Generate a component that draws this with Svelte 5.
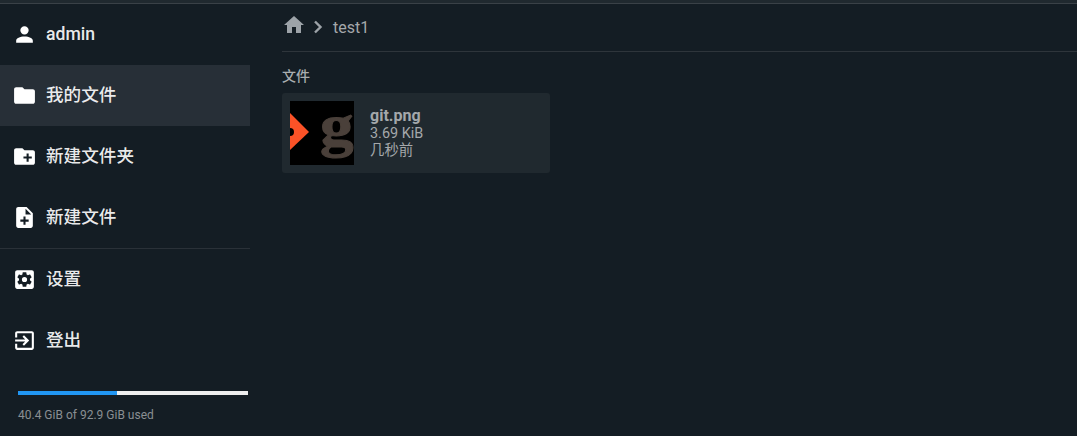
<script>
    const used = 40.4;
    const total = 92.9;
    $: percent = Math.floor((used / total) * 100);
</script>

<div class="page">
    <div class="topbar"></div>
    <div class="body">
        <nav class="sidebar">
            <div class="item user">
                <svg viewBox="0 0 24 24"><path d="M12 4a4 4 0 0 1 4 4 4 4 0 0 1-4 4 4 4 0 0 1-4-4 4 4 0 0 1 4-4m0 10c4.42 0 8 1.79 8 4v2H4v-2c0-2.21 3.58-4 8-4z" /></svg>
                <span>admin</span>
            </div>
            <div class="item active">
                <svg viewBox="0 0 24 24"><path d="M10 4H4c-1.1 0-2 .9-2 2v12c0 1.1.9 2 2 2h16c1.1 0 2-.9 2-2V8c0-1.1-.9-2-2-2h-8l-2-2z" /></svg>
                <span>我的文件</span>
            </div>
            <div class="item">
                <svg viewBox="0 0 24 24"><path d="M20 6h-8l-2-2H4c-1.11 0-2 .89-2 2v12c0 1.11.89 2 2 2h16c1.11 0 2-.89 2-2V8c0-1.11-.89-2-2-2zm-1 8h-3v3h-2v-3h-3v-2h3V9h2v3h3v2z" /></svg>
                <span>新建文件夹</span>
            </div>
            <div class="item">
                <svg viewBox="0 0 24 24"><path d="M14 2H6c-1.1 0-2 .9-2 2v16c0 1.1.9 2 2 2h12c1.1 0 2-.9 2-2V8l-6-6zm2 14h-3v3h-2v-3H8v-2h3v-3h2v3h3v2zm-3-7V3.5L18.5 9H13z" /></svg>
                <span>新建文件</span>
            </div>
            <div class="divider"></div>
            <div class="item">
                <svg viewBox="0 0 24 24"><path d="M19 3H5c-1.1 0-2 .9-2 2v14c0 1.1.9 2 2 2h14c1.1 0 2-.9 2-2V5c0-1.1-.9-2-2-2zm-1.75 9c0 .23-.02.46-.05.68l1.48 1.16c.13.11.17.3.08.45l-1.4 2.42c-.09.15-.27.21-.43.15l-1.74-.7c-.36.28-.76.51-1.18.69l-.26 1.85c-.03.17-.18.3-.35.3h-2.8c-.17 0-.32-.13-.35-.29l-.26-1.85c-.43-.18-.82-.41-1.18-.69l-1.74.7c-.16.06-.34 0-.43-.15l-1.4-2.42c-.09-.15-.05-.34.08-.45l1.48-1.16c-.03-.23-.05-.46-.05-.69s.02-.46.05-.68l-1.48-1.16c-.13-.11-.17-.3-.08-.45l1.4-2.42c.09-.15.27-.21.43-.15l1.74.7c.36-.28.76-.51 1.18-.69l.26-1.85c.03-.17.18-.3.35-.3h2.8c.17 0 .32.13.35.29l.26 1.85c.43.18.82.41 1.18.69l1.74-.7c.16-.06.34 0 .43.15l1.4 2.42c.09.15.05.34-.08.45l-1.48 1.16c.03.23.05.46.05.69zM12 9.5a2.5 2.5 0 1 0 0 5 2.5 2.5 0 0 0 0-5z" /></svg>
                <span>设置</span>
            </div>
            <div class="item">
                <svg viewBox="0 0 24 24"><path d="M10.09 15.59L11.5 17l5-5-5-5-1.41 1.41L12.67 11H3v2h9.67l-2.58 2.59zM19 3H5c-1.11 0-2 .9-2 2v4h2V5h14v14H5v-4H3v4c0 1.1.89 2 2 2h14c1.1 0 2-.9 2-2V5c0-1.1-.9-2-2-2z" /></svg>
                <span>登出</span>
            </div>
            <div class="usage">
                <div class="bar"><div class="fill" style="width: {percent}%;"></div></div>
                <div class="usage-text">{used} GiB of {total} GiB used</div>
            </div>
        </nav>

        <main class="content">
            <div class="breadcrumbs">
                <svg class="home" viewBox="0 0 24 24"><path d="M10 20v-6h4v6h5v-8h3L12 3 2 12h3v8z" /></svg>
                <svg class="chevron" viewBox="0 0 24 24"><path d="M8 6.5l5.5 5.5L8 17.5" /></svg>
                <span>test1</span>
            </div>
            <h2>文件</h2>
            <div class="card">
                <div class="thumb">
                    <svg class="arrow" viewBox="0 0 64 64">
                        <path d="M0 12 L19 31 L0 49 Z" fill="#fb5227" />
                        <circle cx="0" cy="31" r="4" fill="#000" />
                    </svg>
                    <span class="letter">g</span>
                </div>
                <div class="info">
                    <div class="name">git.png</div>
                    <div>3.69 KiB</div>
                    <div>几秒前</div>
                </div>
            </div>
        </main>
    </div>
</div>

<style>
    :global(body) {
        margin: 0;
        background: #141d24;
    }

    .page {
        height: 436px;
        overflow: hidden;
        background: #141d24;
        font-family: Roboto, "Noto Sans CJK SC", sans-serif;
    }

    .topbar {
        height: 3px;
        background: #20292f;
        border-bottom: 1px solid #3a4147;
    }

    .body {
        display: flex;
    }

    .sidebar {
        width: 250px;
        flex-shrink: 0;
    }

    .item {
        height: 61px;
        box-sizing: border-box;
        padding: 0 0 5px 12px;
        display: flex;
        align-items: center;
        gap: 9px;
        color: rgba(255, 255, 255, 0.92);
        font-size: 17.6px;
        font-weight: 500;
    }

    .item.user {
        padding-bottom: 2px;
    }

    .item svg {
        width: 25px;
        height: 25px;
        margin-top: 4px;
        fill: #fff;
    }

    .item.user svg {
        margin-top: 1px;
    }

    .active {
        background: #272f37;
    }

    .divider {
        height: 1px;
        background: #2a3138;
    }

    .usage {
        padding: 20px 2px 0 18px;
    }

    .bar {
        height: 4px;
        background: #eee;
    }

    .fill {
        height: 100%;
        background: #2196f3;
    }

    .usage-text {
        margin-top: 13px;
        font-size: 12px;
        color: #8a8f93;
    }

    .content {
        flex: 1;
        padding: 0 0 0 32px;
    }

    .breadcrumbs {
        height: 48px;
        box-sizing: border-box;
        padding-bottom: 1px;
        display: flex;
        align-items: center;
        border-bottom: 1px solid #2e353b;
        color: #a4a8ab;
        font-size: 16px;
    }

    .home {
        width: 24px;
        height: 24px;
        margin-top: -4px;
        fill: #9da3a8;
    }

    .chevron {
        width: 24px;
        height: 24px;
        margin-left: 1px;
        margin-right: 2px;
        fill: none;
        stroke: #9da3a8;
        stroke-width: 2.4;
    }

    h2 {
        margin: 15px 0 8px;
        font-size: 14px;
        line-height: 18px;
        font-weight: 500;
        color: #a9adb0;
    }

    .card {
        width: 268px;
        height: 80px;
        box-sizing: border-box;
        padding: 8px;
        display: flex;
        gap: 16px;
        background: #20292f;
        border-radius: 3px;
    }

    .thumb {
        width: 64px;
        height: 64px;
        position: relative;
        overflow: hidden;
        background: #000;
    }

    .arrow {
        position: absolute;
        left: 0;
        top: 0;
        width: 64px;
        height: 64px;
    }

    .letter {
        position: absolute;
        left: 30px;
        top: 0;
        font-family: "Liberation Serif", serif;
        font-weight: 700;
        font-size: 60px;
        line-height: 48px;
        color: #4a403a;
        transform: scaleX(1.12);
        transform-origin: left top;
        -webkit-text-stroke: 1px #4a403a;
    }

    .info {
        padding-top: 6px;
        font-size: 14.4px;
        line-height: 17px;
        color: #a4a8ab;
    }

    .name {
        font-size: 16px;
        line-height: 18px;
        font-weight: 700;
    }
</style>
